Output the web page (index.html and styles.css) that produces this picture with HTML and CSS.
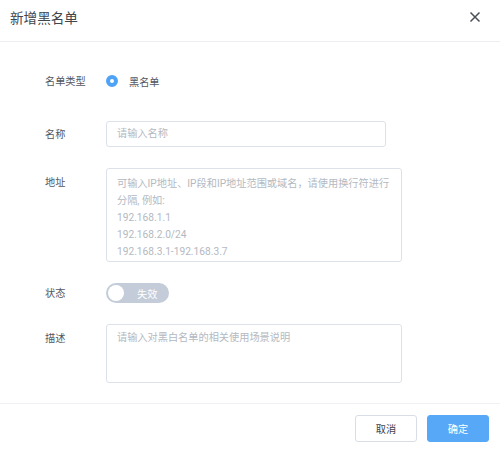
FILE: index.html
```html
<!DOCTYPE html>
<html lang="zh">
<head>
<meta charset="utf-8">
<link rel="stylesheet" href="styles.css">
</head>
<body>
<div class="dialog">
  <div class="header">
    <span class="title">新增黑名单</span>
    <svg class="close" width="12" height="12" viewBox="0 0 12 12"><path d="M1.5 1.5L10.5 10.5M10.5 1.5L1.5 10.5" stroke="#4a4f57" stroke-width="1.5" fill="none"/></svg>
  </div>
  <div class="body">
    <div class="row row-type">
      <div class="label">名单类型</div>
      <div class="control radio-wrap"><span class="radio"></span><span class="radio-text">黑名单</span></div>
    </div>
    <div class="row">
      <div class="label">名称</div>
      <div class="control"><div class="input placeholder">请输入名称</div></div>
    </div>
    <div class="row row-top">
      <div class="label">地址</div>
      <div class="control"><div class="textarea addr placeholder">可输入IP地址、IP段和IP地址范围或域名，请使用换行符进行<br>分隔, 例如:<br>192.168.1.1<br>192.168.2.0/24<br>192.168.3.1-192.168.3.7</div></div>
    </div>
    <div class="row">
      <div class="label">状态</div>
      <div class="control"><div class="switch"><span class="knob"></span><span class="switch-text">失效</span></div></div>
    </div>
    <div class="row row-top">
      <div class="label">描述</div>
      <div class="control"><div class="textarea desc placeholder">请输入对黑白名单的相关使用场景说明</div></div>
    </div>
  </div>
  <div class="footer">
    <button class="btn btn-cancel">取消</button>
    <button class="btn btn-ok">确定</button>
  </div>
</div>
</body>
</html>
```
FILE: styles.css
```css
* { box-sizing: border-box; }
html, body { margin: 0; padding: 0; background: #fff; }
body { font-family: Roboto, "Noto Sans CJK SC", sans-serif; font-size: 10.2px; color: #555a62; }
.dialog { width: 500px; height: 450px; display: flex; flex-direction: column; }
.header { height: 42px; border-bottom: 1px solid #eceef2; display: flex; align-items: center; justify-content: space-between; padding: 0 19px 0 10px; padding-bottom: 8px; }
.title { font-size: 13.6px; color: #40444b; }
.close { display: block; }
.body { padding: 26px 0 0 45px; height: 362px; border-bottom: 1px solid #eff1f5; }
.row { display: flex; align-items: center; margin-bottom: 21px; }
.row-type { height: 26px; margin-bottom: 27px; }
.row-top { align-items: flex-start; }
.row-top .label { padding-top: 6px; }
.label { width: 61px; flex: none; color: #53575f; line-height: 17px; }
.control { flex: none; }
.radio-wrap { display: flex; align-items: center; }
.radio { width: 12px; height: 12px; border-radius: 50%; border: 4px solid #4ea3f7; background: #fff; margin-left: 0; margin-right: 11px; }
.radio-text { color: #53575f; }
.placeholder { color: #b4b9c1; }
.input { width: 280px; height: 26px; border: 1px solid #dde2ea; border-radius: 3px; padding: 0 10px; line-height: 24px; }
.textarea { width: 296px; border: 1px solid #dde2ea; border-radius: 3px; padding: 6px 10px; line-height: 17px; }
.addr { height: 94px; padding-top: 6px; }
.desc { height: 59px; padding-top: 4px; }
.switch { width: 63px; height: 20px; border-radius: 10px; background: #c3ccd8; display: flex; align-items: center; padding-left: 2px; }
.knob { width: 16px; height: 16px; border-radius: 50%; background: #fff; }
.switch-text { color: #fff; margin-left: 13px; }
.footer { display: flex; justify-content: flex-end; gap: 10px; padding: 11px 11px 0 0; }
.btn { width: 62px; height: 27px; border-radius: 3px; font-family: inherit; font-size: 10.2px; padding: 0; cursor: pointer; }
.btn-cancel { background: #fff; border: 1px solid #d9dee6; color: #3d4148; }
.btn-ok { background: #58a8f8; border: 1px solid #58a8f8; color: #fff; }
```
